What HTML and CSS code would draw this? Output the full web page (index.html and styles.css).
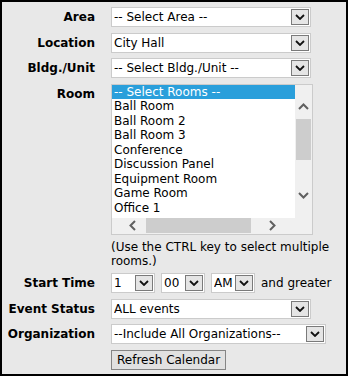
FILE: index.html
```html
<!DOCTYPE html>
<html lang="en">
<head>
  <meta charset="UTF-8">
  <title>Room Calendar Filter</title>
  <link rel="stylesheet" href="styles.css">
</head>
<body>
  <div class="panel">
    <div class="form">
      <!-- Area -->
      <div class="label">Area</div>
      <div class="field">
        <div class="select wide">
          <span class="value">-- Select Area --</span>
          <span class="btn"><svg width="10" height="6" viewBox="0 0 10 6"><polyline points="1,1 5,5 9,1" /></svg></span>
        </div>
      </div>

      <!-- Location -->
      <div class="label">Location</div>
      <div class="field">
        <div class="select wide">
          <span class="value">City Hall</span>
          <span class="btn"><svg width="10" height="6" viewBox="0 0 10 6"><polyline points="1,1 5,5 9,1" /></svg></span>
        </div>
      </div>

      <!-- Building -->
      <div class="label">Bldg./Unit</div>
      <div class="field">
        <div class="select wide">
          <span class="value">-- Select Bldg./Unit --</span>
          <span class="btn"><svg width="10" height="6" viewBox="0 0 10 6"><polyline points="1,1 5,5 9,1" /></svg></span>
        </div>
      </div>

      <!-- Room list -->
      <div class="label label-top">Room</div>
      <div class="field">
        <div class="listbox">
          <div class="options">
            <div class="option selected">-- Select Rooms --</div>
            <div class="option">Ball Room</div>
            <div class="option">Ball Room 2</div>
            <div class="option">Ball Room 3</div>
            <div class="option">Conference</div>
            <div class="option">Discussion Panel</div>
            <div class="option">Equipment Room</div>
            <div class="option">Game Room</div>
            <div class="option">Office 1</div>
          </div>
          <div class="vbar">
            <svg class="arrow-up" width="11" height="7" viewBox="0 0 11 7"><polyline points="1,6 5.5,1.5 10,6" /></svg>
            <div class="vthumb"></div>
            <svg class="arrow-down" width="11" height="7" viewBox="0 0 11 7"><polyline points="1,1 5.5,5.5 10,1" /></svg>
          </div>
          <div class="hbar">
            <svg class="arrow-left" width="7" height="11" viewBox="0 0 7 11"><polyline points="6,1 1.5,5.5 6,10" /></svg>
            <div class="hthumb"></div>
            <svg class="arrow-right" width="7" height="11" viewBox="0 0 7 11"><polyline points="1,1 5.5,5.5 1,10" /></svg>
          </div>
          <div class="corner"></div>
        </div>
        <p class="hint">(Use the CTRL key to select multiple rooms.)</p>
      </div>

      <!-- Start time -->
      <div class="label">Start Time</div>
      <div class="field time-row">
        <div class="select small">
          <span class="value">1</span>
          <span class="btn"><svg width="10" height="6" viewBox="0 0 10 6"><polyline points="1,1 5,5 9,1" /></svg></span>
        </div>
        <div class="select small">
          <span class="value">00</span>
          <span class="btn"><svg width="10" height="6" viewBox="0 0 10 6"><polyline points="1,1 5,5 9,1" /></svg></span>
        </div>
        <div class="select small">
          <span class="value">AM</span>
          <span class="btn"><svg width="10" height="6" viewBox="0 0 10 6"><polyline points="1,1 5,5 9,1" /></svg></span>
        </div>
        <span class="after">and greater</span>
      </div>

      <!-- Event status -->
      <div class="label">Event Status</div>
      <div class="field">
        <div class="select wide">
          <span class="value">ALL events</span>
          <span class="btn"><svg width="10" height="6" viewBox="0 0 10 6"><polyline points="1,1 5,5 9,1" /></svg></span>
        </div>
      </div>

      <!-- Organization -->
      <div class="label">Organization</div>
      <div class="field">
        <div class="select wider">
          <span class="value">--Include All Organizations--</span>
          <span class="btn"><svg width="10" height="6" viewBox="0 0 10 6"><polyline points="1,1 5,5 9,1" /></svg></span>
        </div>
      </div>

      <div></div>
      <div class="field">
        <button class="refresh">Refresh Calendar</button>
      </div>
    </div>
  </div>
</body>
</html>
```

FILE: styles.css
```css
body {
  margin: 0;
  font-family: "DejaVu Sans", Verdana, sans-serif;
  font-size: 12px;
  color: #000;
}

.panel {
  width: 348px;
  height: 376px;
  box-sizing: border-box;
  border: 2px solid #000;
  background-color: #e8e8e8;
  padding-top: 5px;
}

.form {
  display: grid;
  grid-template-columns: 93px auto;
  column-gap: 16px;
  row-gap: 5.5px;
  align-items: center;
}

.label {
  font-weight: bold;
  text-align: right;
}

.label-top {
  align-self: start;
  padding-top: 3px;
}

/* Drop-down lookalike */
.select {
  height: 20px;
  box-sizing: border-box;
  border: 1px solid #cbcbcb;
  background-color: white;
  display: flex;
  align-items: center;
  padding-left: 2px;
}

.select .value {
  flex: 1;
  white-space: nowrap;
  overflow: hidden;
}

.select .btn {
  width: 18px;
  height: 16px;
  box-sizing: border-box;
  border: 1px solid #7a7a7a;
  background-color: #e5e5e5;
  margin-right: 1px;
  display: flex;
  align-items: center;
  justify-content: center;
}

.select .btn svg polyline {
  fill: none;
  stroke: #111;
  stroke-width: 1.8;
}

.wide {
  width: 200px;
}

.wider {
  width: 215px;
}

.small {
  width: 44px;
}

.time-row {
  display: flex;
  align-items: center;
  gap: 6px;
}

/* Multi-select list */
.listbox {
  width: 202px;
  height: 151px;
  box-sizing: border-box;
  border: 1px solid #cbcbcb;
  background-color: #f0f0f0;
  display: grid;
  grid-template-columns: 183px 17px;
  grid-template-rows: 133px 16px;
}

.options {
  background-color: white;
  overflow: hidden;
}

.option {
  line-height: 14.5px;
  padding-left: 2px;
  white-space: nowrap;
}

.option.selected {
  background-color: #2a9fdb;
  color: white;
}

.vbar,
.hbar {
  display: flex;
}

.vbar {
  flex-direction: column;
  align-items: center;
}

.hbar {
  align-items: center;
}

.vbar svg polyline,
.hbar svg polyline {
  fill: none;
  stroke: #606060;
  stroke-width: 2;
}

.arrow-up {
  margin-top: 18px;
}

.vthumb {
  width: 15px;
  height: 41px;
  margin-top: 9px;
  background-color: #cdcdcd;
}

.arrow-down {
  margin-top: 32px;
}

.arrow-left {
  margin-left: 17px;
}

.hthumb {
  width: 105px;
  height: 15px;
  margin-left: 10px;
  background-color: #cdcdcd;
}

.arrow-right {
  margin-left: 18px;
}

.hint {
  margin: 5px 0 0;
  line-height: 14px;
  width: 220px;
}

.refresh {
  font-family: inherit;
  font-size: 12px;
  color: #000;
  height: 20px;
  padding: 0 5px;
  border: 1px solid #858585;
  background-color: #e1e1e1;
  border-radius: 0;
}
```
